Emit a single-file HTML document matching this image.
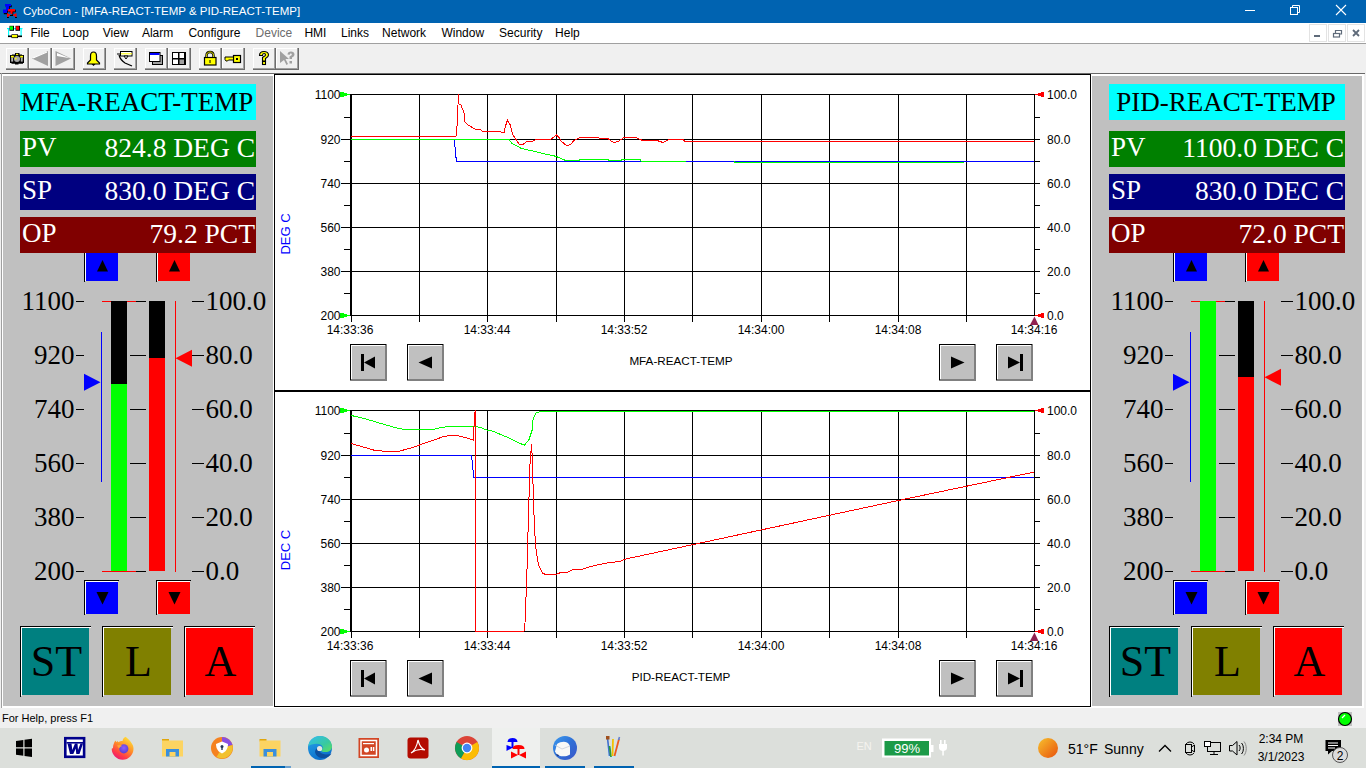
<!DOCTYPE html><html><head><meta charset="utf-8"><style>
html,body{margin:0;padding:0;}
body{width:1366px;height:768px;overflow:hidden;position:relative;background:#f0f0f0;}
body div{position:absolute;box-sizing:border-box;}
svg{position:absolute;left:0;top:0;}
</style></head><body>
<div style="left:0px;top:0px;width:1366px;height:23px;background:#0063b1;"></div>
<div style="z-index:2;left:23px;top:3px;font-family:'Liberation Sans', sans-serif;font-size:11.5px;color:#fff;white-space:nowrap;line-height:16px;">CyboCon - [MFA-REACT-TEMP &amp; PID-REACT-TEMP]</div>
<div style="left:0px;top:23px;width:1366px;height:20px;background:#fff;"></div>
<div style="left:0px;top:43px;width:1366px;height:1px;background:#a0a0a0;"></div>
<div style="z-index:2;left:30.4px;top:25px;font-family:'Liberation Sans', sans-serif;font-size:12px;color:#000;white-space:nowrap;line-height:16px;">File</div>
<div style="z-index:2;left:62.2px;top:25px;font-family:'Liberation Sans', sans-serif;font-size:12px;color:#000;white-space:nowrap;line-height:16px;">Loop</div>
<div style="z-index:2;left:102.8px;top:25px;font-family:'Liberation Sans', sans-serif;font-size:12px;color:#000;white-space:nowrap;line-height:16px;">View</div>
<div style="z-index:2;left:141.9px;top:25px;font-family:'Liberation Sans', sans-serif;font-size:12px;color:#000;white-space:nowrap;line-height:16px;">Alarm</div>
<div style="z-index:2;left:188.4px;top:25px;font-family:'Liberation Sans', sans-serif;font-size:12px;color:#000;white-space:nowrap;line-height:16px;">Configure</div>
<div style="z-index:2;left:255.6px;top:25px;font-family:'Liberation Sans', sans-serif;font-size:12px;color:#6d6d6d;white-space:nowrap;line-height:16px;">Device</div>
<div style="z-index:2;left:304.4px;top:25px;font-family:'Liberation Sans', sans-serif;font-size:12px;color:#000;white-space:nowrap;line-height:16px;">HMI</div>
<div style="z-index:2;left:341px;top:25px;font-family:'Liberation Sans', sans-serif;font-size:12px;color:#000;white-space:nowrap;line-height:16px;">Links</div>
<div style="z-index:2;left:382.1px;top:25px;font-family:'Liberation Sans', sans-serif;font-size:12px;color:#000;white-space:nowrap;line-height:16px;">Network</div>
<div style="z-index:2;left:441.4px;top:25px;font-family:'Liberation Sans', sans-serif;font-size:12px;color:#000;white-space:nowrap;line-height:16px;">Window</div>
<div style="z-index:2;left:499.1px;top:25px;font-family:'Liberation Sans', sans-serif;font-size:12px;color:#000;white-space:nowrap;line-height:16px;">Security</div>
<div style="z-index:2;left:555.1px;top:25px;font-family:'Liberation Sans', sans-serif;font-size:12px;color:#000;white-space:nowrap;line-height:16px;">Help</div>
<div style="left:0px;top:44px;width:1366px;height:29px;background:#f0f0f0;"></div>
<div style="left:0px;top:73px;width:1365px;height:1px;background:#696969;"></div>
<div style="left:1px;top:73px;width:1px;height:635px;background:#a0a0a0;"></div>
<div style="left:2px;top:74px;width:1362px;height:634px;background:#fff;"></div>
<div style="left:2px;top:74px;width:272px;height:634px;background:#fff;"></div>
<div style="left:3px;top:76px;width:270px;height:630px;background:#c0c0c0;"></div>
<div style="left:20px;top:84px;width:236px;height:36px;background:#00ffff;"></div>
<div style="z-index:2;left:18px;top:84px;font-family:'Liberation Serif', serif;font-size:27px;color:#000;white-space:nowrap;line-height:36px;width:238px;text-align:center;">MFA-REACT-TEMP</div>
<div style="left:20px;top:131px;width:236px;height:36px;background:#008000;"></div>
<div style="z-index:2;left:22px;top:129px;font-family:'Liberation Serif', serif;font-size:27px;color:#fff;white-space:nowrap;line-height:36px;">PV</div>
<div style="z-index:2;left:20px;top:130px;font-family:'Liberation Serif', serif;font-size:27.5px;color:#fff;white-space:nowrap;line-height:36px;width:235px;text-align:right;">824.8 DEG C</div>
<div style="left:20px;top:174px;width:236px;height:36px;background:#000080;"></div>
<div style="z-index:2;left:22px;top:172px;font-family:'Liberation Serif', serif;font-size:27px;color:#fff;white-space:nowrap;line-height:36px;">SP</div>
<div style="z-index:2;left:20px;top:173px;font-family:'Liberation Serif', serif;font-size:27.5px;color:#fff;white-space:nowrap;line-height:36px;width:235px;text-align:right;">830.0 DEG C</div>
<div style="left:20px;top:217px;width:236px;height:36px;background:#800000;"></div>
<div style="z-index:2;left:22px;top:215px;font-family:'Liberation Serif', serif;font-size:27px;color:#fff;white-space:nowrap;line-height:36px;">OP</div>
<div style="z-index:2;left:20px;top:216px;font-family:'Liberation Serif', serif;font-size:27.5px;color:#fff;white-space:nowrap;line-height:36px;width:235px;text-align:right;">79.2 PCT</div>
<div style="left:1091px;top:74px;width:272px;height:634px;background:#fff;"></div>
<div style="left:1092px;top:76px;width:270px;height:630px;background:#c0c0c0;"></div>
<div style="left:1109px;top:84px;width:236px;height:36px;background:#00ffff;"></div>
<div style="z-index:2;left:1107px;top:84px;font-family:'Liberation Serif', serif;font-size:27px;color:#000;white-space:nowrap;line-height:36px;width:238px;text-align:center;">PID-REACT-TEMP</div>
<div style="left:1109px;top:131px;width:236px;height:36px;background:#008000;"></div>
<div style="z-index:2;left:1111px;top:129px;font-family:'Liberation Serif', serif;font-size:27px;color:#fff;white-space:nowrap;line-height:36px;">PV</div>
<div style="z-index:2;left:1109px;top:130px;font-family:'Liberation Serif', serif;font-size:27.5px;color:#fff;white-space:nowrap;line-height:36px;width:235px;text-align:right;">1100.0 DEC C</div>
<div style="left:1109px;top:174px;width:236px;height:36px;background:#000080;"></div>
<div style="z-index:2;left:1111px;top:172px;font-family:'Liberation Serif', serif;font-size:27px;color:#fff;white-space:nowrap;line-height:36px;">SP</div>
<div style="z-index:2;left:1109px;top:173px;font-family:'Liberation Serif', serif;font-size:27.5px;color:#fff;white-space:nowrap;line-height:36px;width:235px;text-align:right;">830.0 DEC C</div>
<div style="left:1109px;top:217px;width:236px;height:36px;background:#800000;"></div>
<div style="z-index:2;left:1111px;top:215px;font-family:'Liberation Serif', serif;font-size:27px;color:#fff;white-space:nowrap;line-height:36px;">OP</div>
<div style="z-index:2;left:1109px;top:216px;font-family:'Liberation Serif', serif;font-size:27.5px;color:#fff;white-space:nowrap;line-height:36px;width:235px;text-align:right;">72.0 PCT</div>
<div style="left:274px;top:74px;width:817px;height:633px;background:#000;"></div>
<div style="left:275px;top:75px;width:815px;height:631px;background:#fff;"></div>
<div style="left:274px;top:390px;width:817px;height:2px;background:#000;"></div>
<div style="z-index:2;left:2px;top:711px;font-family:'Liberation Sans', sans-serif;font-size:11px;color:#000;white-space:nowrap;line-height:15px;">For Help, press F1</div>
<div style="left:0px;top:728px;width:1366px;height:40px;background:#dcdfdb;"></div>
<div style="z-index:2;left:3px;top:286px;font-family:'Liberation Serif', serif;font-size:27px;color:#000;white-space:nowrap;line-height:30px;width:71.5px;text-align:right;">1100</div>
<div style="z-index:2;left:205.5px;top:286px;font-family:'Liberation Serif', serif;font-size:27px;color:#000;white-space:nowrap;line-height:30px;">100.0</div>
<div style="z-index:2;left:3px;top:340px;font-family:'Liberation Serif', serif;font-size:27px;color:#000;white-space:nowrap;line-height:30px;width:71.5px;text-align:right;">920</div>
<div style="z-index:2;left:205.5px;top:340px;font-family:'Liberation Serif', serif;font-size:27px;color:#000;white-space:nowrap;line-height:30px;">80.0</div>
<div style="z-index:2;left:3px;top:394px;font-family:'Liberation Serif', serif;font-size:27px;color:#000;white-space:nowrap;line-height:30px;width:71.5px;text-align:right;">740</div>
<div style="z-index:2;left:205.5px;top:394px;font-family:'Liberation Serif', serif;font-size:27px;color:#000;white-space:nowrap;line-height:30px;">60.0</div>
<div style="z-index:2;left:3px;top:448px;font-family:'Liberation Serif', serif;font-size:27px;color:#000;white-space:nowrap;line-height:30px;width:71.5px;text-align:right;">560</div>
<div style="z-index:2;left:205.5px;top:448px;font-family:'Liberation Serif', serif;font-size:27px;color:#000;white-space:nowrap;line-height:30px;">40.0</div>
<div style="z-index:2;left:3px;top:502px;font-family:'Liberation Serif', serif;font-size:27px;color:#000;white-space:nowrap;line-height:30px;width:71.5px;text-align:right;">380</div>
<div style="z-index:2;left:205.5px;top:502px;font-family:'Liberation Serif', serif;font-size:27px;color:#000;white-space:nowrap;line-height:30px;">20.0</div>
<div style="z-index:2;left:3px;top:556px;font-family:'Liberation Serif', serif;font-size:27px;color:#000;white-space:nowrap;line-height:30px;width:71.5px;text-align:right;">200</div>
<div style="z-index:2;left:205.5px;top:556px;font-family:'Liberation Serif', serif;font-size:27px;color:#000;white-space:nowrap;line-height:30px;">0.0</div>
<div style="z-index:2;left:23px;top:628px;font-family:'Liberation Serif', serif;font-size:44px;color:#000;white-space:nowrap;line-height:67px;width:67px;text-align:center;">ST</div>
<div style="z-index:2;left:105px;top:628px;font-family:'Liberation Serif', serif;font-size:44px;color:#000;white-space:nowrap;line-height:67px;width:67px;text-align:center;">L</div>
<div style="z-index:2;left:187px;top:628px;font-family:'Liberation Serif', serif;font-size:44px;color:#000;white-space:nowrap;line-height:67px;width:67px;text-align:center;">A</div>
<div style="z-index:2;left:1092px;top:286px;font-family:'Liberation Serif', serif;font-size:27px;color:#000;white-space:nowrap;line-height:30px;width:71.5px;text-align:right;">1100</div>
<div style="z-index:2;left:1294.5px;top:286px;font-family:'Liberation Serif', serif;font-size:27px;color:#000;white-space:nowrap;line-height:30px;">100.0</div>
<div style="z-index:2;left:1092px;top:340px;font-family:'Liberation Serif', serif;font-size:27px;color:#000;white-space:nowrap;line-height:30px;width:71.5px;text-align:right;">920</div>
<div style="z-index:2;left:1294.5px;top:340px;font-family:'Liberation Serif', serif;font-size:27px;color:#000;white-space:nowrap;line-height:30px;">80.0</div>
<div style="z-index:2;left:1092px;top:394px;font-family:'Liberation Serif', serif;font-size:27px;color:#000;white-space:nowrap;line-height:30px;width:71.5px;text-align:right;">740</div>
<div style="z-index:2;left:1294.5px;top:394px;font-family:'Liberation Serif', serif;font-size:27px;color:#000;white-space:nowrap;line-height:30px;">60.0</div>
<div style="z-index:2;left:1092px;top:448px;font-family:'Liberation Serif', serif;font-size:27px;color:#000;white-space:nowrap;line-height:30px;width:71.5px;text-align:right;">560</div>
<div style="z-index:2;left:1294.5px;top:448px;font-family:'Liberation Serif', serif;font-size:27px;color:#000;white-space:nowrap;line-height:30px;">40.0</div>
<div style="z-index:2;left:1092px;top:502px;font-family:'Liberation Serif', serif;font-size:27px;color:#000;white-space:nowrap;line-height:30px;width:71.5px;text-align:right;">380</div>
<div style="z-index:2;left:1294.5px;top:502px;font-family:'Liberation Serif', serif;font-size:27px;color:#000;white-space:nowrap;line-height:30px;">20.0</div>
<div style="z-index:2;left:1092px;top:556px;font-family:'Liberation Serif', serif;font-size:27px;color:#000;white-space:nowrap;line-height:30px;width:71.5px;text-align:right;">200</div>
<div style="z-index:2;left:1294.5px;top:556px;font-family:'Liberation Serif', serif;font-size:27px;color:#000;white-space:nowrap;line-height:30px;">0.0</div>
<div style="z-index:2;left:1112px;top:628px;font-family:'Liberation Serif', serif;font-size:44px;color:#000;white-space:nowrap;line-height:67px;width:67px;text-align:center;">ST</div>
<div style="z-index:2;left:1194px;top:628px;font-family:'Liberation Serif', serif;font-size:44px;color:#000;white-space:nowrap;line-height:67px;width:67px;text-align:center;">L</div>
<div style="z-index:2;left:1276px;top:628px;font-family:'Liberation Serif', serif;font-size:44px;color:#000;white-space:nowrap;line-height:67px;width:67px;text-align:center;">A</div>
<div style="z-index:2;left:290px;top:86.5px;font-family:'Liberation Sans', sans-serif;font-size:12px;color:#000;white-space:nowrap;line-height:16px;width:50.5px;text-align:right;">1100</div>
<div style="z-index:2;left:1047px;top:86.5px;font-family:'Liberation Sans', sans-serif;font-size:12px;color:#000;white-space:nowrap;line-height:16px;">100.0</div>
<div style="z-index:2;left:290px;top:131.5px;font-family:'Liberation Sans', sans-serif;font-size:12px;color:#000;white-space:nowrap;line-height:16px;width:50.5px;text-align:right;">920</div>
<div style="z-index:2;left:1047px;top:131.5px;font-family:'Liberation Sans', sans-serif;font-size:12px;color:#000;white-space:nowrap;line-height:16px;">80.0</div>
<div style="z-index:2;left:290px;top:175.5px;font-family:'Liberation Sans', sans-serif;font-size:12px;color:#000;white-space:nowrap;line-height:16px;width:50.5px;text-align:right;">740</div>
<div style="z-index:2;left:1047px;top:175.5px;font-family:'Liberation Sans', sans-serif;font-size:12px;color:#000;white-space:nowrap;line-height:16px;">60.0</div>
<div style="z-index:2;left:290px;top:219.5px;font-family:'Liberation Sans', sans-serif;font-size:12px;color:#000;white-space:nowrap;line-height:16px;width:50.5px;text-align:right;">560</div>
<div style="z-index:2;left:1047px;top:219.5px;font-family:'Liberation Sans', sans-serif;font-size:12px;color:#000;white-space:nowrap;line-height:16px;">40.0</div>
<div style="z-index:2;left:290px;top:263.5px;font-family:'Liberation Sans', sans-serif;font-size:12px;color:#000;white-space:nowrap;line-height:16px;width:50.5px;text-align:right;">380</div>
<div style="z-index:2;left:1047px;top:263.5px;font-family:'Liberation Sans', sans-serif;font-size:12px;color:#000;white-space:nowrap;line-height:16px;">20.0</div>
<div style="z-index:2;left:290px;top:307.5px;font-family:'Liberation Sans', sans-serif;font-size:12px;color:#000;white-space:nowrap;line-height:16px;width:50.5px;text-align:right;">200</div>
<div style="z-index:2;left:1047px;top:307.5px;font-family:'Liberation Sans', sans-serif;font-size:12px;color:#000;white-space:nowrap;line-height:16px;">0.0</div>
<div style="z-index:2;left:310px;top:321.5px;font-family:'Liberation Sans', sans-serif;font-size:12px;color:#000;white-space:nowrap;line-height:16px;width:80px;text-align:center;">14:33:36</div>
<div style="z-index:2;left:447px;top:321.5px;font-family:'Liberation Sans', sans-serif;font-size:12px;color:#000;white-space:nowrap;line-height:16px;width:80px;text-align:center;">14:33:44</div>
<div style="z-index:2;left:584px;top:321.5px;font-family:'Liberation Sans', sans-serif;font-size:12px;color:#000;white-space:nowrap;line-height:16px;width:80px;text-align:center;">14:33:52</div>
<div style="z-index:2;left:721px;top:321.5px;font-family:'Liberation Sans', sans-serif;font-size:12px;color:#000;white-space:nowrap;line-height:16px;width:80px;text-align:center;">14:34:00</div>
<div style="z-index:2;left:858px;top:321.5px;font-family:'Liberation Sans', sans-serif;font-size:12px;color:#000;white-space:nowrap;line-height:16px;width:80px;text-align:center;">14:34:08</div>
<div style="z-index:2;left:994px;top:321.5px;font-family:'Liberation Sans', sans-serif;font-size:12px;color:#000;white-space:nowrap;line-height:16px;width:80px;text-align:center;">14:34:16</div>
<div style="z-index:2;left:246px;top:225.5px;font-family:'Liberation Sans', sans-serif;font-size:13px;color:#00f;white-space:nowrap;line-height:16px;width:80px;text-align:center;transform:rotate(-90deg);">DEG C</div>
<div style="z-index:2;left:581px;top:353px;font-family:'Liberation Sans', sans-serif;font-size:11.7px;color:#000;white-space:nowrap;line-height:16px;width:200px;text-align:center;">MFA-REACT-TEMP</div>
<div style="z-index:2;left:290px;top:402.5px;font-family:'Liberation Sans', sans-serif;font-size:12px;color:#000;white-space:nowrap;line-height:16px;width:50.5px;text-align:right;">1100</div>
<div style="z-index:2;left:1047px;top:402.5px;font-family:'Liberation Sans', sans-serif;font-size:12px;color:#000;white-space:nowrap;line-height:16px;">100.0</div>
<div style="z-index:2;left:290px;top:447.5px;font-family:'Liberation Sans', sans-serif;font-size:12px;color:#000;white-space:nowrap;line-height:16px;width:50.5px;text-align:right;">920</div>
<div style="z-index:2;left:1047px;top:447.5px;font-family:'Liberation Sans', sans-serif;font-size:12px;color:#000;white-space:nowrap;line-height:16px;">80.0</div>
<div style="z-index:2;left:290px;top:491.5px;font-family:'Liberation Sans', sans-serif;font-size:12px;color:#000;white-space:nowrap;line-height:16px;width:50.5px;text-align:right;">740</div>
<div style="z-index:2;left:1047px;top:491.5px;font-family:'Liberation Sans', sans-serif;font-size:12px;color:#000;white-space:nowrap;line-height:16px;">60.0</div>
<div style="z-index:2;left:290px;top:535.5px;font-family:'Liberation Sans', sans-serif;font-size:12px;color:#000;white-space:nowrap;line-height:16px;width:50.5px;text-align:right;">560</div>
<div style="z-index:2;left:1047px;top:535.5px;font-family:'Liberation Sans', sans-serif;font-size:12px;color:#000;white-space:nowrap;line-height:16px;">40.0</div>
<div style="z-index:2;left:290px;top:579.5px;font-family:'Liberation Sans', sans-serif;font-size:12px;color:#000;white-space:nowrap;line-height:16px;width:50.5px;text-align:right;">380</div>
<div style="z-index:2;left:1047px;top:579.5px;font-family:'Liberation Sans', sans-serif;font-size:12px;color:#000;white-space:nowrap;line-height:16px;">20.0</div>
<div style="z-index:2;left:290px;top:623.5px;font-family:'Liberation Sans', sans-serif;font-size:12px;color:#000;white-space:nowrap;line-height:16px;width:50.5px;text-align:right;">200</div>
<div style="z-index:2;left:1047px;top:623.5px;font-family:'Liberation Sans', sans-serif;font-size:12px;color:#000;white-space:nowrap;line-height:16px;">0.0</div>
<div style="z-index:2;left:310px;top:637.5px;font-family:'Liberation Sans', sans-serif;font-size:12px;color:#000;white-space:nowrap;line-height:16px;width:80px;text-align:center;">14:33:36</div>
<div style="z-index:2;left:447px;top:637.5px;font-family:'Liberation Sans', sans-serif;font-size:12px;color:#000;white-space:nowrap;line-height:16px;width:80px;text-align:center;">14:33:44</div>
<div style="z-index:2;left:584px;top:637.5px;font-family:'Liberation Sans', sans-serif;font-size:12px;color:#000;white-space:nowrap;line-height:16px;width:80px;text-align:center;">14:33:52</div>
<div style="z-index:2;left:721px;top:637.5px;font-family:'Liberation Sans', sans-serif;font-size:12px;color:#000;white-space:nowrap;line-height:16px;width:80px;text-align:center;">14:34:00</div>
<div style="z-index:2;left:858px;top:637.5px;font-family:'Liberation Sans', sans-serif;font-size:12px;color:#000;white-space:nowrap;line-height:16px;width:80px;text-align:center;">14:34:08</div>
<div style="z-index:2;left:994px;top:637.5px;font-family:'Liberation Sans', sans-serif;font-size:12px;color:#000;white-space:nowrap;line-height:16px;width:80px;text-align:center;">14:34:16</div>
<div style="z-index:2;left:246px;top:541.5px;font-family:'Liberation Sans', sans-serif;font-size:13px;color:#00f;white-space:nowrap;line-height:16px;width:80px;text-align:center;transform:rotate(-90deg);">DEC C</div>
<div style="z-index:2;left:581px;top:669px;font-family:'Liberation Sans', sans-serif;font-size:11.7px;color:#000;white-space:nowrap;line-height:16px;width:200px;text-align:center;">PID-REACT-TEMP</div>
<svg width="1366" height="768" viewBox="0 0 1366 768" style="position:absolute;left:0;top:0;z-index:1" shape-rendering="auto"><rect x="76" y="301" width="8" height="1" fill="#000"/><rect x="192" y="301" width="12" height="1" fill="#000"/><rect x="136" y="301" width="10" height="1" fill="#000"/><rect x="76" y="355" width="8" height="1" fill="#000"/><rect x="192" y="355" width="12" height="1" fill="#000"/><rect x="130" y="355" width="16" height="1" fill="#000"/><rect x="76" y="409" width="8" height="1" fill="#000"/><rect x="192" y="409" width="12" height="1" fill="#000"/><rect x="130" y="409" width="16" height="1" fill="#000"/><rect x="76" y="463" width="8" height="1" fill="#000"/><rect x="192" y="463" width="12" height="1" fill="#000"/><rect x="130" y="463" width="16" height="1" fill="#000"/><rect x="76" y="517" width="8" height="1" fill="#000"/><rect x="192" y="517" width="12" height="1" fill="#000"/><rect x="130" y="517" width="16" height="1" fill="#000"/><rect x="76" y="571" width="8" height="1" fill="#000"/><rect x="192" y="571" width="12" height="1" fill="#000"/><rect x="136" y="571" width="10" height="1" fill="#000"/><rect x="102" y="301" width="34" height="1" fill="#f00"/><rect x="102" y="571" width="34" height="1" fill="#f00"/><rect x="111" y="301" width="16" height="270" fill="#000"/><rect x="149" y="301" width="16" height="270" fill="#000"/><rect x="111" y="384" width="16" height="187" fill="#00ff00"/><rect x="149" y="358" width="16" height="213" fill="#ff0000"/><rect x="175" y="301" width="1" height="271" fill="#f00"/><rect x="101" y="332" width="1" height="150" fill="#00f"/><polygon points="84,373.8 100.5,382.3 84,390.8" fill="#00f"/><polygon points="192,349.8 175.5,358.3 192,366.8" fill="#f00"/><rect x="84" y="253" width="1" height="29" fill="#000"/><rect x="85" y="253" width="1" height="28" fill="#fff"/><rect x="86" y="253" width="32" height="28" fill="#00f"/><polygon points="97,271.5 102.5,260 108,271.5" fill="#000"/><rect x="84" y="580" width="35" height="1" fill="#000"/><rect x="84" y="580" width="1" height="35" fill="#000"/><rect x="85" y="581" width="33" height="1" fill="#fff"/><rect x="85" y="581" width="1" height="33" fill="#fff"/><rect x="86" y="582" width="32" height="32" fill="#00f"/><polygon points="96.5,592 108.5,592 102.5,604.5" fill="#000"/><rect x="156" y="253" width="1" height="29" fill="#000"/><rect x="157" y="253" width="1" height="28" fill="#fff"/><rect x="158" y="253" width="32" height="28" fill="#f00"/><polygon points="169,271.5 174.5,260 180,271.5" fill="#000"/><rect x="156" y="580" width="35" height="1" fill="#000"/><rect x="156" y="580" width="1" height="35" fill="#000"/><rect x="157" y="581" width="33" height="1" fill="#fff"/><rect x="157" y="581" width="1" height="33" fill="#fff"/><rect x="158" y="582" width="32" height="32" fill="#f00"/><polygon points="168.5,592 180.5,592 174.5,604.5" fill="#000"/><rect x="20" y="626" width="71" height="1" fill="#000"/><rect x="20" y="626" width="1" height="71" fill="#000"/><rect x="21" y="627" width="70" height="1" fill="#fff"/><rect x="21" y="627" width="1" height="69" fill="#fff"/><rect x="22" y="628" width="67" height="67" fill="#008080"/><rect x="102" y="626" width="71" height="1" fill="#000"/><rect x="102" y="626" width="1" height="71" fill="#000"/><rect x="103" y="627" width="70" height="1" fill="#fff"/><rect x="103" y="627" width="1" height="69" fill="#fff"/><rect x="104" y="628" width="67" height="67" fill="#808000"/><rect x="184" y="626" width="71" height="1" fill="#000"/><rect x="184" y="626" width="1" height="71" fill="#000"/><rect x="185" y="627" width="70" height="1" fill="#fff"/><rect x="185" y="627" width="1" height="69" fill="#fff"/><rect x="186" y="628" width="67" height="67" fill="#f00"/><rect x="1165" y="301" width="8" height="1" fill="#000"/><rect x="1281" y="301" width="12" height="1" fill="#000"/><rect x="1225" y="301" width="10" height="1" fill="#000"/><rect x="1165" y="355" width="8" height="1" fill="#000"/><rect x="1281" y="355" width="12" height="1" fill="#000"/><rect x="1219" y="355" width="16" height="1" fill="#000"/><rect x="1165" y="409" width="8" height="1" fill="#000"/><rect x="1281" y="409" width="12" height="1" fill="#000"/><rect x="1219" y="409" width="16" height="1" fill="#000"/><rect x="1165" y="463" width="8" height="1" fill="#000"/><rect x="1281" y="463" width="12" height="1" fill="#000"/><rect x="1219" y="463" width="16" height="1" fill="#000"/><rect x="1165" y="517" width="8" height="1" fill="#000"/><rect x="1281" y="517" width="12" height="1" fill="#000"/><rect x="1219" y="517" width="16" height="1" fill="#000"/><rect x="1165" y="571" width="8" height="1" fill="#000"/><rect x="1281" y="571" width="12" height="1" fill="#000"/><rect x="1225" y="571" width="10" height="1" fill="#000"/><rect x="1191" y="301" width="34" height="1" fill="#f00"/><rect x="1191" y="571" width="34" height="1" fill="#f00"/><rect x="1200" y="301" width="16" height="270" fill="#000"/><rect x="1238" y="301" width="16" height="270" fill="#000"/><rect x="1200" y="301" width="16" height="270" fill="#00ff00"/><rect x="1238" y="377" width="16" height="194" fill="#ff0000"/><rect x="1264" y="301" width="1" height="271" fill="#f00"/><rect x="1190" y="332" width="1" height="150" fill="#00f"/><polygon points="1173,373.8 1189.5,382.3 1173,390.8" fill="#00f"/><polygon points="1281,368.8 1264.5,377.3 1281,385.8" fill="#f00"/><rect x="1173" y="253" width="1" height="29" fill="#000"/><rect x="1174" y="253" width="1" height="28" fill="#fff"/><rect x="1175" y="253" width="32" height="28" fill="#00f"/><polygon points="1186,271.5 1191.5,260 1197,271.5" fill="#000"/><rect x="1173" y="580" width="35" height="1" fill="#000"/><rect x="1173" y="580" width="1" height="35" fill="#000"/><rect x="1174" y="581" width="33" height="1" fill="#fff"/><rect x="1174" y="581" width="1" height="33" fill="#fff"/><rect x="1175" y="582" width="32" height="32" fill="#00f"/><polygon points="1185.5,592 1197.5,592 1191.5,604.5" fill="#000"/><rect x="1245" y="253" width="1" height="29" fill="#000"/><rect x="1246" y="253" width="1" height="28" fill="#fff"/><rect x="1247" y="253" width="32" height="28" fill="#f00"/><polygon points="1258,271.5 1263.5,260 1269,271.5" fill="#000"/><rect x="1245" y="580" width="35" height="1" fill="#000"/><rect x="1245" y="580" width="1" height="35" fill="#000"/><rect x="1246" y="581" width="33" height="1" fill="#fff"/><rect x="1246" y="581" width="1" height="33" fill="#fff"/><rect x="1247" y="582" width="32" height="32" fill="#f00"/><polygon points="1257.5,592 1269.5,592 1263.5,604.5" fill="#000"/><rect x="1109" y="626" width="71" height="1" fill="#000"/><rect x="1109" y="626" width="1" height="71" fill="#000"/><rect x="1110" y="627" width="70" height="1" fill="#fff"/><rect x="1110" y="627" width="1" height="69" fill="#fff"/><rect x="1111" y="628" width="67" height="67" fill="#008080"/><rect x="1191" y="626" width="71" height="1" fill="#000"/><rect x="1191" y="626" width="1" height="71" fill="#000"/><rect x="1192" y="627" width="70" height="1" fill="#fff"/><rect x="1192" y="627" width="1" height="69" fill="#fff"/><rect x="1193" y="628" width="67" height="67" fill="#808000"/><rect x="1273" y="626" width="71" height="1" fill="#000"/><rect x="1273" y="626" width="1" height="71" fill="#000"/><rect x="1274" y="627" width="70" height="1" fill="#fff"/><rect x="1274" y="627" width="1" height="69" fill="#fff"/><rect x="1275" y="628" width="67" height="67" fill="#f00"/><rect x="341" y="94" width="699" height="1" fill="#000"/><rect x="341" y="139" width="699" height="1" fill="#000"/><rect x="341" y="183" width="699" height="1" fill="#000"/><rect x="341" y="227" width="699" height="1" fill="#000"/><rect x="341" y="271" width="699" height="1" fill="#000"/><rect x="341" y="315" width="699" height="1" fill="#000"/><rect x="344" y="117" width="6" height="1" fill="#000"/><rect x="1034" y="117" width="6" height="1" fill="#000"/><rect x="344" y="161" width="6" height="1" fill="#000"/><rect x="1034" y="161" width="6" height="1" fill="#000"/><rect x="344" y="205" width="6" height="1" fill="#000"/><rect x="1034" y="205" width="6" height="1" fill="#000"/><rect x="344" y="249" width="6" height="1" fill="#000"/><rect x="1034" y="249" width="6" height="1" fill="#000"/><rect x="344" y="293" width="6" height="1" fill="#000"/><rect x="1034" y="293" width="6" height="1" fill="#000"/><rect x="350" y="94" width="2" height="222" fill="#000"/><rect x="351" y="315" width="1" height="7" fill="#000"/><rect x="419" y="94" width="1" height="228" fill="#000"/><rect x="487" y="94" width="1" height="228" fill="#000"/><rect x="556" y="94" width="1" height="228" fill="#000"/><rect x="624" y="94" width="1" height="228" fill="#000"/><rect x="692" y="94" width="1" height="228" fill="#000"/><rect x="761" y="94" width="1" height="228" fill="#000"/><rect x="829" y="94" width="1" height="228" fill="#000"/><rect x="898" y="94" width="1" height="228" fill="#000"/><rect x="966" y="94" width="1" height="228" fill="#000"/><rect x="1034" y="94" width="1" height="221" fill="#000"/><rect x="1034" y="94" width="1" height="221" fill="#000"/><rect x="340" y="92" width="4" height="5" fill="#00ff00"/><rect x="344" y="93" width="3" height="3" fill="#00ff00"/><rect x="347" y="94" width="3" height="1" fill="#00ff00"/><rect x="340" y="313" width="4" height="5" fill="#00ff00"/><rect x="344" y="314" width="3" height="3" fill="#00ff00"/><rect x="347" y="315" width="3" height="1" fill="#00ff00"/><rect x="1035" y="94" width="3" height="1" fill="#f00"/><rect x="1038" y="93" width="3" height="3" fill="#f00"/><rect x="1041" y="92" width="3" height="5" fill="#f00"/><rect x="1035" y="315" width="3" height="1" fill="#f00"/><rect x="1038" y="314" width="3" height="3" fill="#f00"/><rect x="1041" y="313" width="3" height="5" fill="#f00"/><polygon points="1030,325 1034.5,316.5 1038.5,325" fill="#902050"/><polyline points="351,139.5 454,139.5 454.6,143 455.8,155.3 456.4,161.4 1034,161.4" fill="none" stroke="#00f" stroke-width="1" shape-rendering="crispEdges"/><polyline points="351,139.5 509,139.5 511.5,143 521,148.3 540,152.7 545,154 550,155.1 556,156.3 563,159.5 566,160.5 579,160.5 580,159.5 608,159.5 609,160.5 621,160.5 622,159.5 640,159.5 641,161 686,161 687,161.5 734,161.5 735,162.5 963,162.5 964,161.5 1034,161.5" fill="none" stroke="#00ff00" stroke-width="1" shape-rendering="crispEdges"/><polyline points="686,161.4 734,161.4" fill="none" stroke="#00f" stroke-width="1" shape-rendering="crispEdges"/><polyline points="963,161.4 1034,161.4" fill="none" stroke="#00f" stroke-width="1" shape-rendering="crispEdges"/><polyline points="351,136 456,136 457,126 458,105 458.5,94 459,104 461,105 464,113 464.5,121.5 468,125 475,129 480,129.5 483,131.5 500,131.5 502,132.5 504,132.5 505.5,126 507.5,120 510,124.5 513,135 519,144 523,144.5 526,142 533,141 536,139.5 550,139.5 553.5,137.5 556.5,135 559,137.5 561,141 567,146 571,144 574,140.5 578,138.5 580,137.5 598,137.5 600,138.5 608,138.5 611,141 614,142.5 618,141.5 621,139.5 624,137.5 636,137.5 640,139.5 643,140.5 657,140.5 663,142.5 668,140 683,139.5 685,141.5 1034,141.5" fill="none" stroke="#f00" stroke-width="1" shape-rendering="crispEdges"/><rect x="350" y="344" width="37" height="37" fill="#808080"/><rect x="350" y="344" width="36" height="1" fill="#000"/><rect x="350" y="344" width="1" height="36" fill="#000"/><rect x="351" y="345" width="34" height="1" fill="#fff"/><rect x="351" y="345" width="1" height="34" fill="#fff"/><rect x="352" y="346" width="33" height="33" fill="#c0c0c0"/><rect x="407" y="344" width="37" height="37" fill="#808080"/><rect x="407" y="344" width="36" height="1" fill="#000"/><rect x="407" y="344" width="1" height="36" fill="#000"/><rect x="408" y="345" width="34" height="1" fill="#fff"/><rect x="408" y="345" width="1" height="34" fill="#fff"/><rect x="409" y="346" width="33" height="33" fill="#c0c0c0"/><rect x="939" y="344" width="37" height="37" fill="#808080"/><rect x="939" y="344" width="36" height="1" fill="#000"/><rect x="939" y="344" width="1" height="36" fill="#000"/><rect x="940" y="345" width="34" height="1" fill="#fff"/><rect x="940" y="345" width="1" height="34" fill="#fff"/><rect x="941" y="346" width="33" height="33" fill="#c0c0c0"/><rect x="996" y="344" width="37" height="37" fill="#808080"/><rect x="996" y="344" width="36" height="1" fill="#000"/><rect x="996" y="344" width="1" height="36" fill="#000"/><rect x="997" y="345" width="34" height="1" fill="#fff"/><rect x="997" y="345" width="1" height="34" fill="#fff"/><rect x="998" y="346" width="33" height="33" fill="#c0c0c0"/><rect x="361" y="354" width="3" height="17" fill="#000"/><polygon points="364,362.5 375,356.5 375,368.5" fill="#000"/><polygon points="418.5,362.5 432,356.5 432,368.5" fill="#000"/><polygon points="951,356.5 964.5,362.5 951,368.5" fill="#000"/><polygon points="1008,356.5 1020,362.5 1008,368.5" fill="#000"/><rect x="1020" y="354" width="3" height="17" fill="#000"/><rect x="341" y="410" width="699" height="1" fill="#000"/><rect x="341" y="455" width="699" height="1" fill="#000"/><rect x="341" y="499" width="699" height="1" fill="#000"/><rect x="341" y="543" width="699" height="1" fill="#000"/><rect x="341" y="587" width="699" height="1" fill="#000"/><rect x="341" y="631" width="699" height="1" fill="#000"/><rect x="344" y="433" width="6" height="1" fill="#000"/><rect x="1034" y="433" width="6" height="1" fill="#000"/><rect x="344" y="477" width="6" height="1" fill="#000"/><rect x="1034" y="477" width="6" height="1" fill="#000"/><rect x="344" y="521" width="6" height="1" fill="#000"/><rect x="1034" y="521" width="6" height="1" fill="#000"/><rect x="344" y="565" width="6" height="1" fill="#000"/><rect x="1034" y="565" width="6" height="1" fill="#000"/><rect x="344" y="609" width="6" height="1" fill="#000"/><rect x="1034" y="609" width="6" height="1" fill="#000"/><rect x="350" y="410" width="2" height="222" fill="#000"/><rect x="351" y="631" width="1" height="7" fill="#000"/><rect x="419" y="410" width="1" height="228" fill="#000"/><rect x="487" y="410" width="1" height="228" fill="#000"/><rect x="556" y="410" width="1" height="228" fill="#000"/><rect x="624" y="410" width="1" height="228" fill="#000"/><rect x="692" y="410" width="1" height="228" fill="#000"/><rect x="761" y="410" width="1" height="228" fill="#000"/><rect x="829" y="410" width="1" height="228" fill="#000"/><rect x="898" y="410" width="1" height="228" fill="#000"/><rect x="966" y="410" width="1" height="228" fill="#000"/><rect x="1034" y="410" width="1" height="221" fill="#000"/><rect x="1034" y="410" width="1" height="221" fill="#000"/><rect x="340" y="408" width="4" height="5" fill="#00ff00"/><rect x="344" y="409" width="3" height="3" fill="#00ff00"/><rect x="347" y="410" width="3" height="1" fill="#00ff00"/><rect x="340" y="629" width="4" height="5" fill="#00ff00"/><rect x="344" y="630" width="3" height="3" fill="#00ff00"/><rect x="347" y="631" width="3" height="1" fill="#00ff00"/><rect x="1035" y="410" width="3" height="1" fill="#f00"/><rect x="1038" y="409" width="3" height="3" fill="#f00"/><rect x="1041" y="408" width="3" height="5" fill="#f00"/><rect x="1035" y="631" width="3" height="1" fill="#f00"/><rect x="1038" y="630" width="3" height="3" fill="#f00"/><rect x="1041" y="629" width="3" height="5" fill="#f00"/><polygon points="1030,641 1034.5,632.5 1038.5,641" fill="#902050"/><polyline points="351,455.4 471.1,455.4 472.2,461.5 473.2,471.9 473.75,477.6 1034,477.6" fill="none" stroke="#00f" stroke-width="1" shape-rendering="crispEdges"/><polyline points="351,415.4 365,418.75 395,427.6 404.4,429.5 432.5,429.5 441.9,427.3 452.3,426.4 475.8,426.4 482,428.1 487.3,430.2 491.5,430.7 510.2,438.5 517.5,442.2 524.3,445.3 529,439.6 532.1,430.2 533.1,418.75 536.25,412.5 540.9,411.7 1034,411.5" fill="none" stroke="#00ff00" stroke-width="1" shape-rendering="crispEdges"/><polyline points="351,443.5 364.8,447.4 375.2,450.5 386.7,451.4 398.1,451.4 410.6,448.2 420,444.8 437.7,438.75 444,436.25 453.3,435.4 460.7,436.25 464.9,437.5 473.2,440 473.75,433.3 474.3,418.2 475.3,410 476,631 524,631 525,623 526.8,576.6 528.6,510.7 530.1,460.8 531.7,444.2 532.3,460.8 533.4,496.3 534.1,518 535.5,545.7 538.4,564.8 542.8,573.2 545.4,574.5 556,574.5 560,572.8 566.6,572.5 573.2,569.5 581.6,569.4 589.3,566.8 599.2,564.6 608.7,562.6 619.7,561.5 624.4,559.3 698,543.5 903,499.5 1034,472.1" fill="none" stroke="#f00" stroke-width="1" shape-rendering="crispEdges"/><rect x="350" y="660" width="37" height="37" fill="#808080"/><rect x="350" y="660" width="36" height="1" fill="#000"/><rect x="350" y="660" width="1" height="36" fill="#000"/><rect x="351" y="661" width="34" height="1" fill="#fff"/><rect x="351" y="661" width="1" height="34" fill="#fff"/><rect x="352" y="662" width="33" height="33" fill="#c0c0c0"/><rect x="407" y="660" width="37" height="37" fill="#808080"/><rect x="407" y="660" width="36" height="1" fill="#000"/><rect x="407" y="660" width="1" height="36" fill="#000"/><rect x="408" y="661" width="34" height="1" fill="#fff"/><rect x="408" y="661" width="1" height="34" fill="#fff"/><rect x="409" y="662" width="33" height="33" fill="#c0c0c0"/><rect x="939" y="660" width="37" height="37" fill="#808080"/><rect x="939" y="660" width="36" height="1" fill="#000"/><rect x="939" y="660" width="1" height="36" fill="#000"/><rect x="940" y="661" width="34" height="1" fill="#fff"/><rect x="940" y="661" width="1" height="34" fill="#fff"/><rect x="941" y="662" width="33" height="33" fill="#c0c0c0"/><rect x="996" y="660" width="37" height="37" fill="#808080"/><rect x="996" y="660" width="36" height="1" fill="#000"/><rect x="996" y="660" width="1" height="36" fill="#000"/><rect x="997" y="661" width="34" height="1" fill="#fff"/><rect x="997" y="661" width="1" height="34" fill="#fff"/><rect x="998" y="662" width="33" height="33" fill="#c0c0c0"/><rect x="361" y="670" width="3" height="17" fill="#000"/><polygon points="364,678.5 375,672.5 375,684.5" fill="#000"/><polygon points="418.5,678.5 432,672.5 432,684.5" fill="#000"/><polygon points="951,672.5 964.5,678.5 951,684.5" fill="#000"/><polygon points="1008,672.5 1020,678.5 1008,684.5" fill="#000"/><rect x="1020" y="670" width="3" height="17" fill="#000"/><rect x="6" y="48" width="22" height="1" fill="#fff"/><rect x="6" y="48" width="1" height="21" fill="#fff"/><rect x="27" y="48" width="1" height="21" fill="#a0a0a0"/><rect x="6" y="68" width="22" height="1" fill="#a0a0a0"/><rect x="28" y="48" width="1" height="22" fill="#6d6d6d"/><rect x="6" y="69" width="23" height="1" fill="#6d6d6d"/><rect x="29" y="48" width="22" height="1" fill="#fff"/><rect x="29" y="48" width="1" height="21" fill="#fff"/><rect x="50" y="48" width="1" height="21" fill="#a0a0a0"/><rect x="29" y="68" width="22" height="1" fill="#a0a0a0"/><rect x="51" y="48" width="1" height="22" fill="#6d6d6d"/><rect x="29" y="69" width="23" height="1" fill="#6d6d6d"/><rect x="52" y="48" width="22" height="1" fill="#fff"/><rect x="52" y="48" width="1" height="21" fill="#fff"/><rect x="73" y="48" width="1" height="21" fill="#a0a0a0"/><rect x="52" y="68" width="22" height="1" fill="#a0a0a0"/><rect x="74" y="48" width="1" height="22" fill="#6d6d6d"/><rect x="52" y="69" width="23" height="1" fill="#6d6d6d"/><rect x="83" y="48" width="22" height="1" fill="#fff"/><rect x="83" y="48" width="1" height="21" fill="#fff"/><rect x="104" y="48" width="1" height="21" fill="#a0a0a0"/><rect x="83" y="68" width="22" height="1" fill="#a0a0a0"/><rect x="105" y="48" width="1" height="22" fill="#6d6d6d"/><rect x="83" y="69" width="23" height="1" fill="#6d6d6d"/><rect x="114" y="48" width="22" height="1" fill="#fff"/><rect x="114" y="48" width="1" height="21" fill="#fff"/><rect x="135" y="48" width="1" height="21" fill="#a0a0a0"/><rect x="114" y="68" width="22" height="1" fill="#a0a0a0"/><rect x="136" y="48" width="1" height="22" fill="#6d6d6d"/><rect x="114" y="69" width="23" height="1" fill="#6d6d6d"/><rect x="145" y="48" width="22" height="1" fill="#fff"/><rect x="145" y="48" width="1" height="21" fill="#fff"/><rect x="166" y="48" width="1" height="21" fill="#a0a0a0"/><rect x="145" y="68" width="22" height="1" fill="#a0a0a0"/><rect x="167" y="48" width="1" height="22" fill="#6d6d6d"/><rect x="145" y="69" width="23" height="1" fill="#6d6d6d"/><rect x="168" y="48" width="22" height="1" fill="#fff"/><rect x="168" y="48" width="1" height="21" fill="#fff"/><rect x="189" y="48" width="1" height="21" fill="#a0a0a0"/><rect x="168" y="68" width="22" height="1" fill="#a0a0a0"/><rect x="190" y="48" width="1" height="22" fill="#6d6d6d"/><rect x="168" y="69" width="23" height="1" fill="#6d6d6d"/><rect x="199" y="48" width="22" height="1" fill="#fff"/><rect x="199" y="48" width="1" height="21" fill="#fff"/><rect x="220" y="48" width="1" height="21" fill="#a0a0a0"/><rect x="199" y="68" width="22" height="1" fill="#a0a0a0"/><rect x="221" y="48" width="1" height="22" fill="#6d6d6d"/><rect x="199" y="69" width="23" height="1" fill="#6d6d6d"/><rect x="222" y="48" width="22" height="1" fill="#fff"/><rect x="222" y="48" width="1" height="21" fill="#fff"/><rect x="243" y="48" width="1" height="21" fill="#a0a0a0"/><rect x="222" y="68" width="22" height="1" fill="#a0a0a0"/><rect x="244" y="48" width="1" height="22" fill="#6d6d6d"/><rect x="222" y="69" width="23" height="1" fill="#6d6d6d"/><rect x="253" y="48" width="22" height="1" fill="#fff"/><rect x="253" y="48" width="1" height="21" fill="#fff"/><rect x="274" y="48" width="1" height="21" fill="#a0a0a0"/><rect x="253" y="68" width="22" height="1" fill="#a0a0a0"/><rect x="275" y="48" width="1" height="22" fill="#6d6d6d"/><rect x="253" y="69" width="23" height="1" fill="#6d6d6d"/><rect x="276" y="48" width="22" height="1" fill="#fff"/><rect x="276" y="48" width="1" height="21" fill="#fff"/><rect x="297" y="48" width="1" height="21" fill="#a0a0a0"/><rect x="276" y="68" width="22" height="1" fill="#a0a0a0"/><rect x="298" y="48" width="1" height="22" fill="#6d6d6d"/><rect x="276" y="69" width="23" height="1" fill="#6d6d6d"/><g><path d="M10,55 h2 v-0.5 h3 v-1.5 h4.5 v1.5 h2.5 v0.5 h2 v8 h-1 v0.7 h-4.5 v0.8 h-3.5 v-0.8 h-3.5 v-0.7 h-1.5 z" fill="#000"/><rect x="11" y="55.8" width="2.8" height="1.8" fill="#ff0"/><rect x="20.2" y="55.8" width="2.8" height="1.8" fill="#ff0"/><rect x="16" y="53.8" width="2.2" height="1.3" fill="#ff0"/><rect x="11.2" y="57.6" width="1.9" height="4" fill="#b4b4b4"/><rect x="20.8" y="57.6" width="1.9" height="4" fill="#b4b4b4"/><circle cx="17" cy="59" r="3" fill="#a8a8a8"/><rect x="15" y="57.8" width="1.6" height="1.6" fill="#ff0"/></g><polygon points="32,58.5 48,51 48,66" fill="#a0a0a0"/><polyline points="33,58 47,52" stroke="#fff" stroke-width="1.2" fill="none"/><polygon points="55.5,51 71,58.5 55.5,66" fill="#a0a0a0"/><polygon points="57,53 70,58.3 57,56" fill="#fff"/><path d="M93.5,52 c2,0 3,1.5 3,4 v4 l3,3 v1 h-12 v-1 l3,-3 v-4 c0,-2.5 1,-4 3,-4 z" fill="#ff0" stroke="#000" stroke-width="1.2"/><polygon points="91.5,64 95.5,64 93.5,66" fill="#000"/><rect x="120.5" y="51.5" width="11.5" height="4.5" fill="#fff" stroke="#000" stroke-width="1"/><rect x="121" y="53.3" width="11" height="1" fill="#ff0"/><line x1="117" y1="54" x2="121" y2="54" stroke="#000"/><polygon points="124,56 128,56 126,59" fill="#fff" stroke="#000" stroke-width="1"/><path d="M119,55 c1,4 3,6 6,8 l7,3" fill="none" stroke="#000" stroke-width="1.2"/><rect x="152.5" y="55.5" width="10" height="9" fill="#a0a0a0" stroke="#000" stroke-width="1"/><rect x="149.5" y="52.5" width="10.5" height="9" fill="#fff" stroke="#000" stroke-width="1"/><rect x="150" y="53" width="9.5" height="2" fill="#00f"/><rect x="172" y="52" width="14" height="13" fill="#000"/><rect x="173" y="53" width="5" height="5" fill="#fff"/><rect x="179.5" y="53" width="4.5" height="5" fill="#fff"/><rect x="173" y="59.5" width="5" height="4.5" fill="#fff"/><rect x="179.5" y="59.5" width="4.5" height="4.5" fill="#a0a0a0"/><path d="M206.5,58 v-2.5 c0,-2.3 1.5,-3.5 3.5,-3.5 s3.5,1.2 3.5,3.5 v2.5" fill="none" stroke="#000" stroke-width="2.4"/><path d="M206.5,58 v-2.5 c0,-2.3 1.5,-3.5 3.5,-3.5 s3.5,1.2 3.5,3.5 v2.5" fill="none" stroke="#ff0" stroke-width="0.9"/><rect x="204.5" y="57.5" width="11.5" height="7.5" fill="#ff0" stroke="#000" stroke-width="1.2"/><rect x="209.5" y="60" width="1" height="3" fill="#000"/><rect x="233.5" y="55.5" width="7" height="7" fill="#ff0" stroke="#000" stroke-width="1.2"/><rect x="236" y="58" width="2" height="2" fill="#000"/><path d="M225,57 h8.5 v3 h-5 l-1,1 h-1.5 l-1,-1.5 z" fill="#ff0" stroke="#000" stroke-width="1"/><path d="M259.5,55.5 c0,-3 2,-4 4.5,-4 s4.5,1.5 4.5,3.5 c0,2 -2,3 -3,3.5 v2.5 h-3 v-3.5 c1,-1 3,-1.5 3,-2.5 c0,-1 -0.7,-1.5 -1.5,-1.5 s-1.5,0.5 -1.5,2 z" fill="#ff0" stroke="#000" stroke-width="1.1"/><rect x="262.5" y="61.5" width="3" height="3" fill="#ff0" stroke="#000" stroke-width="1.1"/><polygon points="280,51 289,59 285.5,59 288,64 286.5,65 284,60 280,63" fill="#a0a0a0"/><path d="M287.5,54.5 c0,-2 1.5,-3 3.5,-3 s3.5,1 3.5,3 c0,1.5 -1.5,2.5 -2.5,3 v1.5 h-2.5 v-2.5 c1,-0.7 2.3,-1 2.3,-2 c0,-0.7 -0.5,-1 -1,-1 s-1,0.5 -1,1.2 z" fill="#a0a0a0"/><rect x="289.5" y="61" width="2.5" height="2.5" fill="#a0a0a0"/><g><path d="M5,4.5 h6 v2 h-2 v3 l-2,2 v2 h-4 v-3 h3 v-4 h-1 z" fill="#000" transform="translate(0.8,0.8)"/><path d="M5,4 h6 v2.2 h-2 v3 l-2,2 v1.8 h-4 v-3.5 h3 v-3.3 h-1 z" fill="#00f"/><path d="M8,9 h7 v2.5 h-2.5 v2.5 h-1.5 v-2.5 h-3 z" fill="#000" transform="translate(0.8,0.8)"/><path d="M8,9 h7 v2.5 h-2.5 v2.5 h-2 v-2.5 h-2.5 z" fill="#f00"/><polygon points="7,13 11,15 7,17.5" fill="#f00"/><polygon points="16.5,13 12.5,15 16.5,17.5" fill="#f00"/><rect x="7" y="17" width="2" height="1" fill="#000"/><rect x="15" y="17" width="2" height="1" fill="#000"/><rect x="10" y="15" width="3" height="1" fill="#000"/></g><rect x="1245" y="10" width="10" height="1" fill="#fff"/><rect x="1290.5" y="7.5" width="7" height="7" fill="none" stroke="#fff" stroke-width="1"/><path d="M1292.5,7 V5.5 H1299.5 V12.5 H1298" fill="none" stroke="#fff" stroke-width="1"/><path d="M1336,5 L1346,15 M1346,5 L1336,15" stroke="#fff" stroke-width="1.1"/><rect x="1309.5" y="24.5" width="17" height="17" fill="#fff" stroke="#e3e3e3" stroke-width="1"/><rect x="1328.5" y="24.5" width="17" height="17" fill="#fff" stroke="#e3e3e3" stroke-width="1"/><rect x="1347.5" y="24.5" width="17" height="17" fill="#fff" stroke="#e3e3e3" stroke-width="1"/><rect x="1314" y="35" width="6" height="2" fill="#5f6b7a"/><rect x="1333.5" y="33.5" width="6" height="3.5" fill="none" stroke="#5f6b7a" stroke-width="1.2"/><path d="M1335.5,33 v-2.5 h6 v3.5 h-2" fill="none" stroke="#5f6b7a" stroke-width="1.2"/><path d="M1353,30 L1359,36 M1359,30 L1353,36" stroke="#5f6b7a" stroke-width="1.8"/><rect x="7" y="28" width="15.5" height="1.2" fill="#00ffff"/><rect x="8" y="28" width="1.2" height="8" fill="#00ffff"/><rect x="20.5" y="28" width="1.2" height="8" fill="#00ffff"/><rect x="9.5" y="25.8" width="4.5" height="5" fill="#000"/><rect x="10" y="26.3" width="3" height="3.5" fill="#00ff00"/><rect x="15.5" y="25.8" width="4.5" height="5" fill="#000"/><rect x="16" y="26.3" width="3" height="3.5" fill="#f00"/><rect x="8" y="35.5" width="14" height="1.6" fill="#000"/><rect x="11.5" y="34.3" width="6.5" height="3.8" fill="#000"/><rect x="12" y="35" width="5.2" height="2.3" fill="#ff0"/><rect x="1338" y="712" width="14" height="14" fill="#c0c0c0"/><circle cx="1345" cy="719" r="6.5" fill="#00ff00" stroke="#000" stroke-width="1.2"/><path d="M1342,718 l3,-3" stroke="#fff" stroke-width="1.2"/><defs><linearGradient id="sun" x1="0" y1="0" x2="1" y2="1"><stop offset="0" stop-color="#f7c12e"/><stop offset="1" stop-color="#e8510c"/></linearGradient><linearGradient id="ff" x1="0" y1="0" x2="0" y2="1"><stop offset="0" stop-color="#ffd43a"/><stop offset="0.5" stop-color="#ff7139"/><stop offset="1" stop-color="#e31587"/></linearGradient><linearGradient id="edge" x1="0" y1="0" x2="1" y2="1"><stop offset="0" stop-color="#35c1f1"/><stop offset="0.6" stop-color="#1b84d6"/><stop offset="1" stop-color="#0b56a6"/></linearGradient><linearGradient id="edg2" x1="0" y1="0" x2="1" y2="1"><stop offset="0" stop-color="#2fb9e9"/><stop offset="1" stop-color="#6ee06a"/></linearGradient></defs><polygon points="16,741 23.3,740 23.3,747.3 16,747.3" fill="#000"/><polygon points="24.5,739.8 32,738.8 32,747.3 24.5,747.3" fill="#000"/><polygon points="16,748.5 23.3,748.5 23.3,755.8 16,754.8" fill="#000"/><polygon points="24.5,748.5 32,748.5 32,757 24.5,756" fill="#000"/><rect x="65.3" y="738.2" width="18.8" height="18.6" fill="#fff" stroke="#00008b" stroke-width="2.6"/><rect x="66.5" y="742" width="16.5" height="1.6" fill="#00008b"/><polygon points="67.5,743.5 71.5,743.5 72.3,750 75,743.5 77.5,743.5 78,750 80.5,743.5 83,743.5 79.5,754 76.3,754 75.7,748.5 73.3,754 70,754" fill="#00008b"/><defs><linearGradient id="ff2" x1="0.8" y1="0" x2="0.2" y2="1"><stop offset="0" stop-color="#ffe83a"/><stop offset="0.45" stop-color="#ff8a28"/><stop offset="0.75" stop-color="#ff3b4a"/><stop offset="1" stop-color="#e6127a"/></linearGradient><radialGradient id="ffp" cx="0.5" cy="0.4" r="0.6"><stop offset="0" stop-color="#8f5dff"/><stop offset="1" stop-color="#5a3fcf"/></radialGradient></defs><path d="M113,748 c0,-3 1,-5.5 2.5,-7.5 l0.8,1.8 l1.2,-1.5 l0.5,1.5 c1.5,-1 3,-1.3 4.5,-1.3 c0.5,-2 1.5,-3.5 3,-4.2 c2,1.5 4.5,3.5 5.8,6 c1.5,2 2.2,3.5 2.2,6 c0,6 -4.8,11 -10.8,11 c-6,0 -11,-5 -11,-11 z" fill="url(#ff2)"/><circle cx="123.8" cy="748.8" r="4.6" fill="url(#ffp)"/><path d="M117,745.5 c2,-1 4,-0.5 5,0.5 c-1.5,0.5 -2.5,1.2 -3,2.5 z" fill="#ffa436"/><rect x="162" y="739" width="7" height="2.5" fill="#e0a60c"/><rect x="162" y="740.5" width="21" height="16" fill="#fcd462"/><rect x="166" y="749" width="13" height="7.5" fill="#3b8fdc"/><rect x="169.5" y="752" width="6" height="4.5" fill="#fcd462"/><rect x="259.5" y="739" width="7" height="2.5" fill="#e0a60c"/><rect x="259.5" y="740.5" width="21" height="16" fill="#fcd462"/><rect x="263.5" y="749" width="13" height="7.5" fill="#3b8fdc"/><rect x="267.0" y="752" width="6" height="4.5" fill="#fcd462"/><circle cx="222" cy="748" r="11" fill="#f58220"/><path d="M222,737 a11,11 0 0 1 10.5,8 l-10.5,3 z" fill="#8a4fe0"/><path d="M232.5,745 a11,11 0 0 1 -16,12 l5.5,-9 z" fill="#f2c12e"/><path d="M216,744 l6,-2.5 l6,2.5 c0,5 -2.5,8 -6,9.5 c-3.5,-1.5 -6,-4.5 -6,-9.5 z" fill="#fff"/><circle cx="222" cy="746.5" r="1.5" fill="#243858"/><rect x="221.3" y="747" width="1.4" height="3" fill="#243858"/><defs><linearGradient id="eb" x1="0" y1="0" x2="0.4" y2="1"><stop offset="0" stop-color="#2aa8ea"/><stop offset="1" stop-color="#0b6fcc"/></linearGradient><linearGradient id="eg" x1="0" y1="0" x2="1" y2="1"><stop offset="0" stop-color="#33bdf0"/><stop offset="0.6" stop-color="#38c9a0"/><stop offset="1" stop-color="#5fe15a"/></linearGradient></defs><circle cx="320" cy="748" r="12" fill="url(#eb)"/><path d="M308.2,746.5 c0.8,-6 5.5,-10.5 11.8,-10.5 c6.5,0 12,5 12,10.5 c0,3.5 -3,5.5 -6.5,5.5 c-2.5,0 -4,-0.5 -4.5,-1.5 c1.5,-1 2.2,-2.5 1.5,-4 c-0.8,-2 -3,-2.8 -5.5,-2.8 c-4,0 -7.5,1 -8.8,2.8 z" fill="url(#eg)"/><path d="M315,752 c1,4 4,6 8,6 c4,0 7,-2 8.5,-4.5 c-2,1 -4,1.2 -6,1 c-3,-0.3 -5,-1.5 -6,-3 c-1,-1.5 -1.3,-3 -1,-4 c-2,0.8 -3.5,2.5 -3.5,4.5 z" fill="#0c4f9e"/><circle cx="319.6" cy="748.5" r="2.6" fill="#e4e6e4"/><rect x="358.5" y="738" width="20.5" height="20" fill="#d24625"/><rect x="361" y="740.5" width="15.5" height="15" fill="none" stroke="#fff" stroke-width="1.5"/><rect x="363" y="743" width="11" height="1.2" fill="#fff"/><circle cx="366.5" cy="750" r="2.5" fill="#fff"/><rect x="370.5" y="747" width="1.5" height="4" fill="#fff"/><rect x="372.8" y="747" width="1.5" height="4" fill="#fff"/><rect x="407.5" y="737.5" width="21" height="21" rx="3" fill="#b30b00"/><path d="M411,753 c3,-2 6,-7 7,-13 c1,4 3,9 7,10 c-4,-1 -10,0 -14,3 z" fill="none" stroke="#fff" stroke-width="1.2"/><circle cx="467" cy="748" r="12" fill="#db4437"/><path d="M467,748 L456.6,742 A12,12 0 0 0 461,758.4 z" fill="#0f9d58"/><path d="M467,748 L461,758.4 A12,12 0 0 0 479,748 L467,748 z" fill="#fbbc05"/><path d="M467,748 L479,748 A12,12 0 0 0 477.4,742 z" fill="#fbbc05"/><circle cx="467" cy="748" r="5.4" fill="#fff"/><circle cx="467" cy="748" r="4.2" fill="#4285f4"/><rect x="492" y="728" width="48" height="40" fill="#eef0ee"/><path d="M507.5,742 c0,-2.5 2,-4 5,-4 s5,1.5 5,4 z" fill="#00f"/><rect x="511.5" y="739" width="2" height="9" fill="#00f"/><polygon points="506.5,745 513,747.5 506.5,751" fill="#00f"/><path d="M512.5,749 c0,-2.5 2,-4 6,-4 s6,1.5 6,4 z" fill="#f00"/><rect x="517.5" y="748" width="2" height="7" fill="#f00"/><polygon points="511,751.5 518,755 511,758.5" fill="#f00"/><polygon points="526,751.5 519,755 526,758.5" fill="#f00"/><defs><linearGradient id="tb" x1="0" y1="0" x2="1" y2="1"><stop offset="0" stop-color="#3b9cf0"/><stop offset="0.5" stop-color="#2f6fd6"/><stop offset="1" stop-color="#3a55c8"/></linearGradient></defs><circle cx="565" cy="748" r="12" fill="url(#tb)"/><path d="M557,744 c3,-2 7,-3 10,-1.5 c2,1 3,3 3,5 v7 c-3,2 -8,2.5 -11,1 c-2,-1 -3,-2 -4,-4 z" fill="#f8f8f6"/><path d="M555,745 l7,4 l8,-3" stroke="#c8cdd8" stroke-width="0.8" fill="none"/><path d="M556,754 l2,2.5 l1,-1.5 z" fill="#1c2a6a"/><path d="M606.5,746 h12 l-1.5,11.5 c-2,1.3 -7,1.3 -9,0 z" fill="#cfe3ef"/><line x1="609.5" y1="756" x2="607.5" y2="738" stroke="#3f6fcf" stroke-width="1.6"/><rect x="606" y="736" width="3.5" height="3.5" fill="#a0501c"/><line x1="611" y1="757" x2="609.5" y2="746" stroke="#2d9a3d" stroke-width="1.8"/><line x1="612.5" y1="756" x2="613" y2="739" stroke="#f2c200" stroke-width="1.8"/><line x1="614.5" y1="756" x2="619" y2="739" stroke="#ee5a1e" stroke-width="1.8"/><line x1="618.5" y1="740" x2="619.5" y2="737" stroke="#5f7fd0" stroke-width="1.6"/><rect x="251" y="766" width="40" height="2" fill="#0063b1"/><rect x="285" y="766" width="6" height="2" fill="#6aa0cf"/><rect x="492" y="766" width="48" height="2" fill="#0063b1"/><rect x="545" y="766" width="40" height="2" fill="#0063b1"/><rect x="594" y="766" width="40" height="2" fill="#0063b1"/><text x="856.5" y="750" font-family="Liberation Sans" font-size="11" fill="#f5f3ef">EN</text><rect x="882" y="738.5" width="49" height="19" fill="#fff"/><rect x="884.5" y="741" width="44.5" height="14.5" fill="#1c9a48"/><rect x="931" y="745" width="2.5" height="7" fill="#fff"/><text x="907" y="753" font-family="Liberation Sans" font-size="13" fill="#fff" text-anchor="middle">99%</text><rect x="940" y="740" width="1.6" height="4" fill="#fff"/><rect x="944" y="740" width="1.6" height="4" fill="#fff"/><path d="M939,744 h8 v4 c0,2 -2,3 -4,3 c-2,0 -4,-1 -4,-3 z" fill="#fff"/><rect x="942.3" y="750" width="1.5" height="5.5" fill="#fff"/><circle cx="1048" cy="748" r="10" fill="url(#sun)"/><text x="1068" y="754" font-family="Liberation Sans" font-size="14" fill="#000">51°F</text><text x="1104" y="754" font-family="Liberation Sans" font-size="14" fill="#000">Sunny</text><path d="M1159,751.5 l6,-6 l6,6" stroke="#000" stroke-width="1.3" fill="none"/><path d="M1186,744 a5,5 0 0 1 8,0 M1186,753 a5,5 0 0 0 8,0" stroke="#000" stroke-width="1" fill="none"/><rect x="1185.5" y="744.5" width="6" height="8" fill="none" stroke="#000" stroke-width="1"/><path d="M1191.5,747 l3,-2 v7 l-3,-2" fill="none" stroke="#000" stroke-width="1"/><rect x="1207.5" y="742.5" width="13" height="9" fill="none" stroke="#000" stroke-width="1"/><rect x="1204.5" y="741.5" width="6" height="5" fill="#fff" stroke="#000" stroke-width="1"/><path d="M1214,751.5 v3 M1210,754.5 h8" stroke="#000" stroke-width="1"/><path d="M1229.5,745.5 h3 l4.5,-4 v13.5 l-4.5,-4 h-3 z" fill="none" stroke="#000" stroke-width="1"/><path d="M1239,745 c1.5,1.5 1.5,4.5 0,6 M1241.5,743 c2.5,2.5 2.5,8.5 0,11" stroke="#000" stroke-width="1" fill="none"/><path d="M1244,741.5 c3,3.5 3,10.5 0,14" stroke="#888" stroke-width="1" fill="none"/><text x="1281" y="743" font-family="Liberation Sans" font-size="12" fill="#000" text-anchor="middle">2:34 PM</text><text x="1281" y="761" font-family="Liberation Sans" font-size="12" fill="#000" text-anchor="middle">3/1/2023</text><path d="M1325.5,740 h15.5 v11 h-9 l-4,3.5 v-3.5 h-2.5 z" fill="#000"/><rect x="1328" y="742.5" width="10" height="1" fill="#fff"/><rect x="1328" y="745" width="10" height="1" fill="#fff"/><rect x="1328" y="747.5" width="7" height="1" fill="#fff"/><circle cx="1340" cy="755" r="7.5" fill="#dcdcdc" stroke="#555" stroke-width="1"/><text x="1340" y="759.5" font-family="Liberation Sans" font-size="12" fill="#000" text-anchor="middle">2</text></svg>
</body></html>
